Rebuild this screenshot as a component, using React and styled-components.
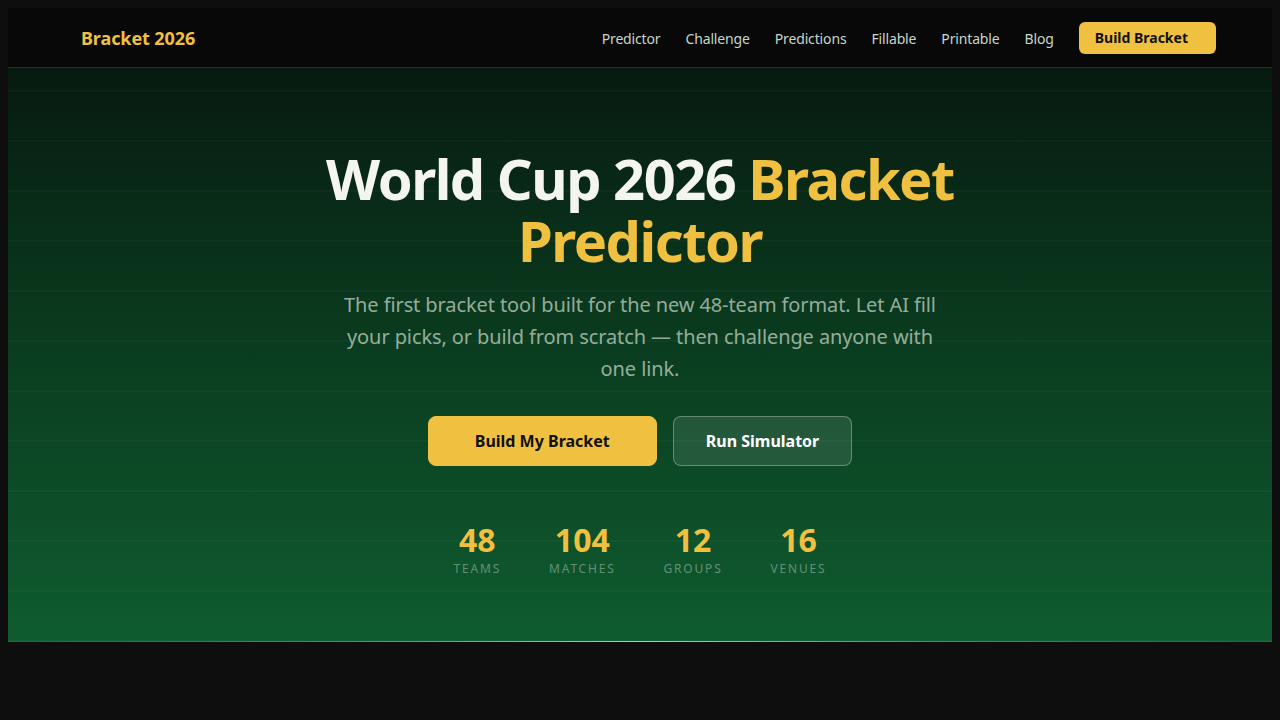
import React from 'react';
import styled, { createGlobalStyle } from 'styled-components';

const GlobalStyle = createGlobalStyle`
  body {
    background: #0e0e0e;
    font-family: "Noto Sans", "Open Sans", sans-serif;
    color: #f5f5f0;
  }
  * { box-sizing: border-box; }
`;

const Header = styled.header`
  height: 60px;
  background: #080808;
  border-bottom: 1px solid rgba(240, 192, 64, 0.2);
`;

const HeaderInner = styled.div`
  max-width: 1200px;
  height: 100%;
  margin: 0 auto;
  padding: 0 24px 0 41px;
  display: flex;
  align-items: center;
  justify-content: space-between;
`;

const Logo = styled.a`
  font-size: 18px;
  font-weight: 700;
  color: #f0c040;
  text-decoration: none;
  letter-spacing: -0.1px;
`;

const Nav = styled.nav`
  display: flex;
  align-items: center;
  gap: 25px;
  padding-top: 2px;
`;

const NavLink = styled.a`
  font-size: 14px;
  letter-spacing: -0.15px;
  color: #c6d6c8;
  text-decoration: none;
`;

const NavButton = styled.a`
  display: flex;
  align-items: center;
  height: 32px;
  margin-top: -2px;
  padding: 0 28px 0 16px;
  border-radius: 6px;
  background: #f0c040;
  color: #111;
  font-size: 14px;
  font-weight: 700;
  text-decoration: none;
`;

const Hero = styled.section`
  position: relative;
  padding: 80px 24px 63px;
  text-align: center;
  background:
    repeating-linear-gradient(
      to bottom,
      transparent 0,
      transparent 22px,
      rgba(255, 255, 255, 0.025) 22px,
      rgba(255, 255, 255, 0.025) 24px,
      transparent 24px,
      transparent 50px
    ),
    linear-gradient(to bottom, #071a10 0%, #0a3a1e 45%, #0f5c30 100%);

  &::after {
    content: "";
    position: absolute;
    left: 0;
    right: 0;
    bottom: -1px;
    height: 2px;
    background: linear-gradient(
      to right,
      rgba(240, 192, 64, 0.08) 0%,
      rgba(240, 192, 64, 0.35) 25%,
      #f0c040 50%,
      rgba(240, 192, 64, 0.35) 75%,
      rgba(240, 192, 64, 0.08) 100%
    );
  }
`;

const Title = styled.h1`
  margin: 0 auto;
  max-width: 700px;
  font-size: 56px;
  font-weight: 700;
  line-height: 1.1;
  letter-spacing: -1.5px;
  color: #f5f5f0;
`;

const Accent = styled.span`
  color: #f0c040;
`;

const Subtitle = styled.p`
  margin: 18px auto 0;
  max-width: 600px;
  font-size: 20px;
  line-height: 32px;
  letter-spacing: -0.1px;
  color: rgba(220, 230, 220, 0.68);
`;

const Actions = styled.div`
  margin-top: 31px;
  display: flex;
  justify-content: center;
  gap: 16px;
`;

const Button = styled.a`
  display: flex;
  align-items: center;
  justify-content: center;
  height: 50px;
  padding: 0 ${(p) => (p.$primary ? '46px' : '32px')};
  border-radius: 8px;
  font-size: 16px;
  font-weight: 700;
  text-decoration: none;
  background: ${(p) => (p.$primary ? '#f0c040' : 'rgba(255, 255, 255, 0.1)')};
  color: ${(p) => (p.$primary ? '#111' : '#fff')};
  border: 1px solid ${(p) => (p.$primary ? '#f0c040' : 'rgba(255, 255, 255, 0.3)')};
`;

const Stats = styled.div`
  margin-top: 55px;
  display: flex;
  justify-content: center;
  gap: 48px;
`;

const Stat = styled.div`
  display: flex;
  flex-direction: column;
  align-items: center;
`;

const StatNumber = styled.div`
  font-size: 32px;
  font-weight: 700;
  line-height: 38px;
  color: #f0c040;
`;

const StatLabel = styled.div`
  font-size: 12px;
  line-height: 20px;
  letter-spacing: 1.8px;
  text-transform: uppercase;
  color: rgba(255, 255, 255, 0.36);
`;

const links = ['Predictor', 'Challenge', 'Predictions', 'Fillable', 'Printable', 'Blog'];

const stats = [
  { value: '48', label: 'Teams' },
  { value: '104', label: 'Matches' },
  { value: '12', label: 'Groups' },
  { value: '16', label: 'Venues' },
];

export default function App() {
  return (
    <>
      <GlobalStyle />
      <Header>
        <HeaderInner>
          <Logo href="#">Bracket 2026</Logo>
          <Nav>
            {links.map((l) => (
              <NavLink key={l} href="#">{l}</NavLink>
            ))}
            <NavButton href="#">Build Bracket</NavButton>
          </Nav>
        </HeaderInner>
      </Header>
      <Hero>
        <Title>
          World Cup 2026 <Accent>Bracket Predictor</Accent>
        </Title>
        <Subtitle>
          The first bracket tool built for the new 48-team format. Let AI fill your picks, or
          build from scratch — then challenge anyone with one link.
        </Subtitle>
        <Actions>
          <Button $primary href="#">Build My Bracket</Button>
          <Button href="#">Run Simulator</Button>
        </Actions>
        <Stats>
          {stats.map((s) => (
            <Stat key={s.label}>
              <StatNumber>{s.value}</StatNumber>
              <StatLabel>{s.label}</StatLabel>
            </Stat>
          ))}
        </Stats>
      </Hero>
    </>
  );
}
